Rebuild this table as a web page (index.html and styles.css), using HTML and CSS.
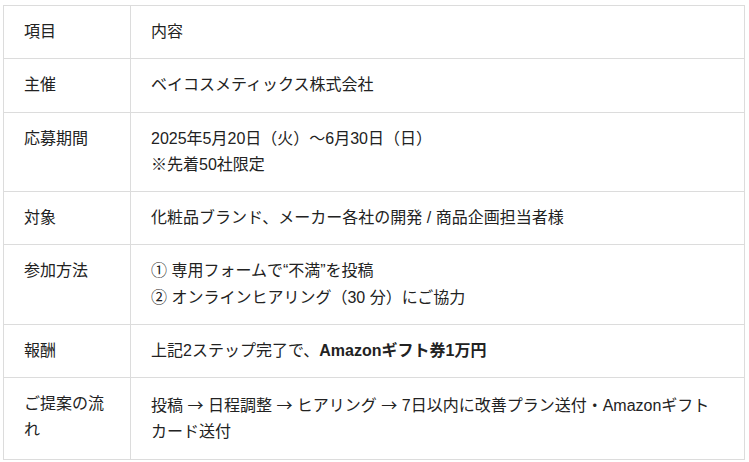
FILE: index.html
```html
<!DOCTYPE html>
<html lang="ja">
<head>
<meta charset="utf-8">
<link rel="stylesheet" href="styles.css">
</head>
<body>
<table class="info">
  <tr><td class="key">項目</td><td class="val">内容</td></tr>
  <tr><td class="key">主催</td><td class="val">ベイコスメティックス株式会社</td></tr>
  <tr><td class="key">応募期間</td><td class="val">2025年5月20日（火）〜6月30日（日）<br>※先着50社限定</td></tr>
  <tr><td class="key">対象</td><td class="val">化粧品ブランド、メーカー各社の開発 / 商品企画担当者様</td></tr>
  <tr><td class="key">参加方法</td><td class="val">① 専用フォームで“不満”を投稿<br>② オンラインヒアリング（30 分）にご協力</td></tr>
  <tr><td class="key">報酬</td><td class="val">上記2ステップ完了で、<strong>Amazonギフト券1万円</strong></td></tr>
  <tr><td class="key">ご提案の流れ</td><td class="val">投稿 <span class="arrow">→</span> 日程調整 <span class="arrow">→</span> ヒアリング <span class="arrow">→</span> 7日以内に改善プラン送付・Amazonギフトカード送付</td></tr>
</table>
</body>
</html>
```
FILE: styles.css
```css
html, body {
  margin: 0;
  padding: 0;
  background: #fff;
}
body {
  font-family: "Liberation Sans", "Noto Sans CJK JP", sans-serif;
  color: #222;
  font-size: 16px;
  line-height: 26.25px;
}
.info {
  border-collapse: collapse;
  margin: 5px 0 0 3px;
  width: 742px;
}
.info td {
  border: 1px solid #dcdcdc;
  padding: 13px 20px;
  vertical-align: top;
}
.info .key {
  width: 86px;
}
.info strong {
  font-weight: 700;
}
.arrow {
  font-family: "Noto Sans CJK JP", sans-serif;
}
```
